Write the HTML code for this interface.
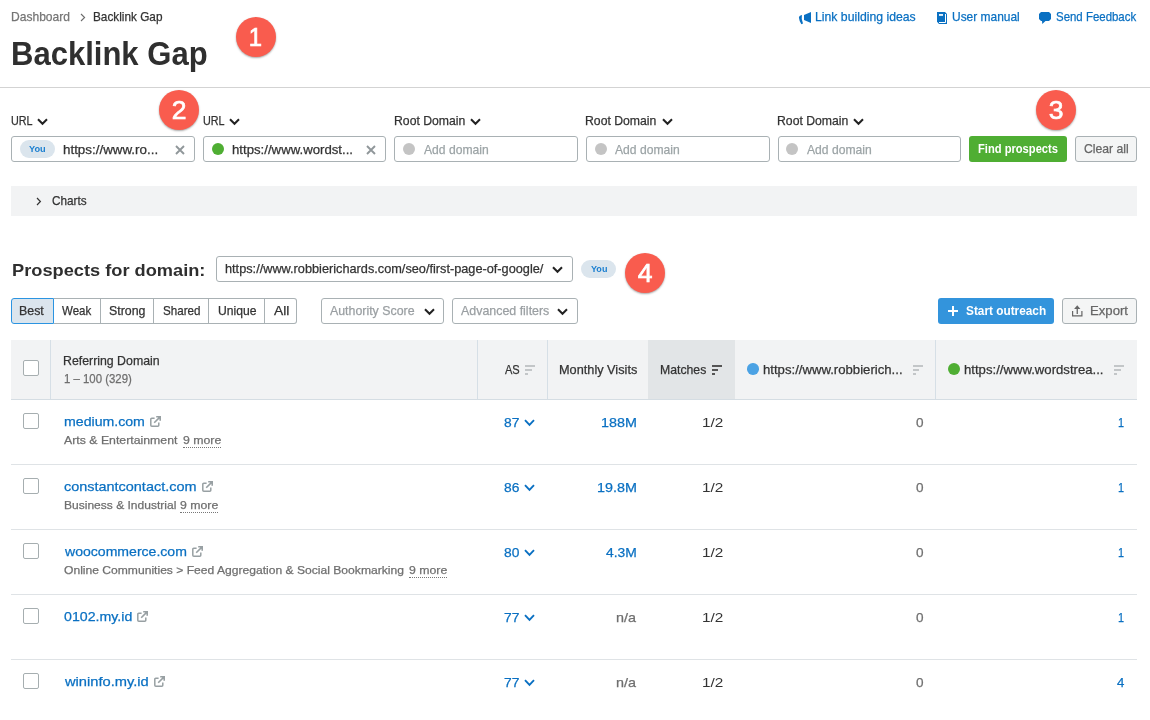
<!DOCTYPE html>
<html lang="en"><head><meta charset="utf-8"><title>Backlink Gap</title>
<style>
*{box-sizing:border-box;margin:0;padding:0}
html,body{width:1150px;height:720px;overflow:hidden;background:#fff;font-family:"Liberation Sans",sans-serif}
body{position:relative}
#page{position:absolute;left:0;top:0;width:1150px;height:720px;will-change:transform}
.t{position:absolute;white-space:pre;line-height:20px;height:20px;transform-origin:0 50%;z-index:3;-webkit-text-stroke:0.25px}
.a{position:absolute}
.inp{position:absolute;top:136px;height:26px;border:1px solid #a9b1b4;border-radius:3px;background:#fff}
.dot{position:absolute;width:12px;height:12px;border-radius:50%}
.num{position:absolute;width:40px;height:40px;border-radius:50%;background:#f95c4e;color:#fff;font-size:26.5px;font-weight:400;-webkit-text-stroke:0.7px #fff;line-height:41px;text-align:center;box-shadow:0 1px 2px rgba(0,0,0,.35)}
.hl{position:absolute;height:1px;left:11px;width:1126px;background:#dfe3e6}
.vl{position:absolute;width:1px;top:340px;height:59px;background:#d6dfe6}
.cb{position:absolute;left:23px;width:16px;height:16px;border:1px solid #a6aeb0;border-radius:2px;background:#fff}
.seg{position:absolute;top:298px;height:26px;border:1px solid #a9b1b4;border-left:none;background:#fff}
svg{position:absolute;overflow:visible}
.num span{display:inline-block;transform:scaleX(1.0)}

</style></head>
<body>
<div id="page">
<!-- top rule -->
<div class="a" style="left:0;top:87px;width:1150px;height:1px;background:#d3d3d3"></div>
<!-- breadcrumb arrow -->
<svg style="left:80px;top:12.5px" width="6" height="9" viewBox="0 0 6 9"><path d="M1 1 L4.6 4.5 L1 8" fill="none" stroke="#6b6b6b" stroke-width="1.1"/></svg>
<!-- numbered markers -->
<div class="num" style="left:236px;top:17px"><span style="transform:scaleX(0.9) translateX(-1px)">1</span></div>
<div class="num" style="left:159px;top:90px"><span>2</span></div>
<div class="num" style="left:1036px;top:90px"><span>3</span></div>
<div class="num" style="left:625px;top:253px"><span>4</span></div>
<!-- top link icons -->
<svg style="left:798px;top:11px" width="14" height="14" viewBox="0 0 14 14"><path d="M6 4.1 L13 1 V12 L6 9 Z" fill="#0a70c2"/><path d="M3.6 4 Q0.9 4.6 0.9 6.6 Q1 9.4 3.4 13.2 L5 12.5 Q3 8.6 3.9 4 Z" fill="#0a70c2"/></svg>
<svg style="left:937px;top:12px" width="10" height="12" viewBox="0 0 10 12"><path d="M0 0 H8 L10 2 V12 H2 L0 9.7 Z" fill="#0a70c2"/><path d="M2 10.5 H8.5 V2" fill="none" stroke="#fff" stroke-width="1"/><rect x="2" y="2.1" width="4" height="1.7" fill="#fff"/></svg>
<svg style="left:1039px;top:12px" width="12" height="12" viewBox="0 0 12 12"><path d="M2 0 H10 L12 2 V7 L10 9 H6.5 L3.3 12 L3 9 H2 L0 7 V2 Z" fill="#0a70c2"/></svg>
<!-- label chevrons -->
<svg style="left:37.0px;top:117.6px" width="11" height="8" viewBox="0 0 11 8"><path d="M1 1.2 L5.5 5.8 L10 1.2" fill="none" stroke="#222" stroke-width="2"/></svg>
<svg style="left:229.0px;top:117.6px" width="11" height="8" viewBox="0 0 11 8"><path d="M1 1.2 L5.5 5.8 L10 1.2" fill="none" stroke="#222" stroke-width="2"/></svg>
<svg style="left:470.0px;top:117.6px" width="11" height="8" viewBox="0 0 11 8"><path d="M1 1.2 L5.5 5.8 L10 1.2" fill="none" stroke="#222" stroke-width="2"/></svg>
<svg style="left:661.5px;top:117.6px" width="11" height="8" viewBox="0 0 11 8"><path d="M1 1.2 L5.5 5.8 L10 1.2" fill="none" stroke="#222" stroke-width="2"/></svg>
<svg style="left:853.0px;top:117.6px" width="11" height="8" viewBox="0 0 11 8"><path d="M1 1.2 L5.5 5.8 L10 1.2" fill="none" stroke="#222" stroke-width="2"/></svg>
<!-- inputs -->
<div class="inp" style="left:11px;width:183.5px"></div>
<div class="inp" style="left:203px;width:183px"></div>
<div class="inp" style="left:394px;width:184px"></div>
<div class="inp" style="left:586px;width:184px"></div>
<div class="inp" style="left:778px;width:183px"></div>
<div class="a" style="left:20px;top:140px;width:35px;height:18px;border-radius:9px;background:#dbe5ed"></div>
<div class="dot" style="left:212px;top:143px;background:#4fae33"></div>
<div class="dot" style="left:403px;top:143px;background:#c4c4c4"></div>
<div class="dot" style="left:594.5px;top:143px;background:#c4c4c4"></div>
<div class="dot" style="left:786px;top:143px;background:#c4c4c4"></div>
<svg style="left:175px;top:144.5px" width="10" height="10" viewBox="0 0 10 10"><path d="M1 1 L9 9 M9 1 L1 9" stroke="#90979a" stroke-width="1.9"/></svg>
<svg style="left:366px;top:144.5px" width="10" height="10" viewBox="0 0 10 10"><path d="M1 1 L9 9 M9 1 L1 9" stroke="#90979a" stroke-width="1.9"/></svg>
<div class="a" style="left:969px;top:136px;width:98px;height:26px;border-radius:3px;background:#4fae33"></div>
<div class="a" style="left:1075px;top:136px;width:62px;height:26px;border-radius:3px;background:#f4f5f5;border:1px solid #a9b1b4"></div>
<!-- charts bar -->
<div class="a" style="left:11px;top:186px;width:1126px;height:30px;background:#f2f3f4"></div>
<svg style="left:36px;top:196.5px" width="6" height="9" viewBox="0 0 6 9"><path d="M1 1 L4.4 4.5 L1 8" fill="none" stroke="#333" stroke-width="1.2"/></svg>
<!-- prospects dropdown -->
<div class="a" style="left:216px;top:256px;width:357px;height:26px;border:1px solid #a9b1b4;border-radius:3px;background:#fff"></div>
<svg style="left:552.2px;top:266px" width="11" height="8" viewBox="0 0 11 8"><path d="M1 1.2 L5.5 5.8 L10 1.2" fill="none" stroke="#222" stroke-width="2"/></svg>
<div class="a" style="left:581px;top:260px;width:35px;height:18px;border-radius:9px;background:#dbe5ed"></div>
<!-- segmented buttons -->
<div class="seg" style="left:11px;width:43px;border:1px solid #2b94e1;background:#dbe5ed;border-radius:3px 0 0 3px;z-index:2"></div>
<div class="seg" style="left:54px;width:46.5px"></div>
<div class="seg" style="left:100.5px;width:53px"></div>
<div class="seg" style="left:153.5px;width:55px"></div>
<div class="seg" style="left:208.5px;width:56px"></div>
<div class="seg" style="left:264.5px;width:32px;border-radius:0 3px 3px 0"></div>
<!-- filter dropdowns -->
<div class="a" style="left:321px;top:298px;width:123px;height:26px;border:1px solid #a9b1b4;border-radius:3px;background:#fff"></div>
<svg style="left:423.5px;top:307.5px" width="11" height="8" viewBox="0 0 11 8"><path d="M1 1.2 L5.5 5.8 L10 1.2" fill="none" stroke="#222" stroke-width="2"/></svg>
<div class="a" style="left:452px;top:298px;width:126px;height:26px;border:1px solid #a9b1b4;border-radius:3px;background:#fff"></div>
<svg style="left:557.2px;top:307.5px" width="11" height="8" viewBox="0 0 11 8"><path d="M1 1.2 L5.5 5.8 L10 1.2" fill="none" stroke="#222" stroke-width="2"/></svg>
<!-- action buttons -->
<div class="a" style="left:938px;top:298px;width:116px;height:26px;border-radius:3px;background:#3394dc"></div>
<svg style="left:948.2px;top:305.9px" width="10" height="10" viewBox="0 0 10 10"><path d="M5 0 V10 M0 5 H10" stroke="#fff" stroke-width="2"/></svg>
<div class="a" style="left:1062px;top:298px;width:75px;height:26px;border-radius:3px;background:#f4f5f5;border:1px solid #a9b1b4"></div>
<svg style="left:1072px;top:305px" width="11" height="12" viewBox="0 0 11 12"><path d="M0.6 6 V10.8 H9.9 V6" fill="none" stroke="#666" stroke-width="1.2"/><path d="M5.25 9 V3" fill="none" stroke="#666" stroke-width="1.3"/><path d="M5.25 0.2 L8.4 4 H2.1 Z" fill="#666"/></svg>
<!-- table header -->
<div class="a" style="left:11px;top:340px;width:1126px;height:59px;background:#f2f3f4"></div>
<div class="a" style="left:648px;top:340px;width:87px;height:59px;background:#e2e5e7"></div>
<div class="vl" style="left:50px"></div>
<div class="vl" style="left:477px"></div>
<div class="vl" style="left:547px"></div>
<div class="vl" style="left:935px"></div>
<div class="hl" style="top:399px;background:#d5dde3"></div>
<div class="hl" style="top:464px"></div>
<div class="hl" style="top:529px"></div>
<div class="hl" style="top:594px"></div>
<div class="hl" style="top:659px"></div>
<!-- header dots -->
<div class="dot" style="left:747px;top:363px;width:11.5px;height:11.5px;background:#4ba2e4"></div>
<div class="dot" style="left:948px;top:363px;background:#4fae33"></div>
<!-- checkboxes -->
<div class="cb" style="top:360px"></div>
<div class="cb" style="top:413px"></div>
<div class="cb" style="top:478px"></div>
<div class="cb" style="top:543px"></div>
<div class="cb" style="top:608px"></div>
<div class="cb" style="top:673px"></div>

<div class="a" style="left:183.0px;top:446.5px;width:38.0px;height:0;border-top:1px dotted #777"></div>
<div class="a" style="left:180.4px;top:511.5px;width:38.0px;height:0;border-top:1px dotted #777"></div>
<div class="a" style="left:408.9px;top:576.5px;width:38.0px;height:0;border-top:1px dotted #777"></div>
<svg style="left:150.2px;top:416.0px" width="11" height="11" viewBox="0 0 11 11"><path d="M4.6 2.2 H1.8 Q0.8 2.2 0.8 3.2 V9.2 Q0.8 10.2 1.8 10.2 H7.8 Q8.8 10.2 8.8 9.2 V6.6" fill="none" stroke="#98a0a3" stroke-width="1.5"/><path d="M4.2 6.8 L9.6 1.4 M6.2 0.8 H10.2 V4.8" fill="none" stroke="#98a0a3" stroke-width="1.6"/></svg>
<svg style="left:201.8px;top:481.0px" width="11" height="11" viewBox="0 0 11 11"><path d="M4.6 2.2 H1.8 Q0.8 2.2 0.8 3.2 V9.2 Q0.8 10.2 1.8 10.2 H7.8 Q8.8 10.2 8.8 9.2 V6.6" fill="none" stroke="#98a0a3" stroke-width="1.5"/><path d="M4.2 6.8 L9.6 1.4 M6.2 0.8 H10.2 V4.8" fill="none" stroke="#98a0a3" stroke-width="1.6"/></svg>
<svg style="left:192.3px;top:546.0px" width="11" height="11" viewBox="0 0 11 11"><path d="M4.6 2.2 H1.8 Q0.8 2.2 0.8 3.2 V9.2 Q0.8 10.2 1.8 10.2 H7.8 Q8.8 10.2 8.8 9.2 V6.6" fill="none" stroke="#98a0a3" stroke-width="1.5"/><path d="M4.2 6.8 L9.6 1.4 M6.2 0.8 H10.2 V4.8" fill="none" stroke="#98a0a3" stroke-width="1.6"/></svg>
<svg style="left:137.3px;top:611.0px" width="11" height="11" viewBox="0 0 11 11"><path d="M4.6 2.2 H1.8 Q0.8 2.2 0.8 3.2 V9.2 Q0.8 10.2 1.8 10.2 H7.8 Q8.8 10.2 8.8 9.2 V6.6" fill="none" stroke="#98a0a3" stroke-width="1.5"/><path d="M4.2 6.8 L9.6 1.4 M6.2 0.8 H10.2 V4.8" fill="none" stroke="#98a0a3" stroke-width="1.6"/></svg>
<svg style="left:153.8px;top:676.0px" width="11" height="11" viewBox="0 0 11 11"><path d="M4.6 2.2 H1.8 Q0.8 2.2 0.8 3.2 V9.2 Q0.8 10.2 1.8 10.2 H7.8 Q8.8 10.2 8.8 9.2 V6.6" fill="none" stroke="#98a0a3" stroke-width="1.5"/><path d="M4.2 6.8 L9.6 1.4 M6.2 0.8 H10.2 V4.8" fill="none" stroke="#98a0a3" stroke-width="1.6"/></svg>
<svg style="left:524.2px;top:419.4px" width="11" height="8" viewBox="0 0 11 8"><path d="M1 1.2 L5.5 5.8 L10 1.2" fill="none" stroke="#0a70c2" stroke-width="1.9"/></svg>
<svg style="left:524.2px;top:484.4px" width="11" height="8" viewBox="0 0 11 8"><path d="M1 1.2 L5.5 5.8 L10 1.2" fill="none" stroke="#0a70c2" stroke-width="1.9"/></svg>
<svg style="left:524.2px;top:549.4px" width="11" height="8" viewBox="0 0 11 8"><path d="M1 1.2 L5.5 5.8 L10 1.2" fill="none" stroke="#0a70c2" stroke-width="1.9"/></svg>
<svg style="left:524.2px;top:614.4px" width="11" height="8" viewBox="0 0 11 8"><path d="M1 1.2 L5.5 5.8 L10 1.2" fill="none" stroke="#0a70c2" stroke-width="1.9"/></svg>
<svg style="left:524.2px;top:679.4px" width="11" height="8" viewBox="0 0 11 8"><path d="M1 1.2 L5.5 5.8 L10 1.2" fill="none" stroke="#0a70c2" stroke-width="1.9"/></svg>
<div class="a" style="left:525px;top:365px;width:10px;height:2px;background:#c3c6c8"></div><div class="a" style="left:525px;top:369px;width:6.5px;height:2px;background:#c3c6c8"></div><div class="a" style="left:525px;top:373px;width:3px;height:2px;background:#c3c6c8"></div>
<div class="a" style="left:711.5px;top:365px;width:10px;height:2px;background:#555"></div><div class="a" style="left:711.5px;top:369px;width:6.5px;height:2px;background:#555"></div><div class="a" style="left:711.5px;top:373px;width:3px;height:2px;background:#555"></div>
<div class="a" style="left:912.5px;top:365px;width:10px;height:2px;background:#c3c6c8"></div><div class="a" style="left:912.5px;top:369px;width:6.5px;height:2px;background:#c3c6c8"></div><div class="a" style="left:912.5px;top:373px;width:3px;height:2px;background:#c3c6c8"></div>
<div class="a" style="left:1114px;top:365px;width:10px;height:2px;background:#c3c6c8"></div><div class="a" style="left:1114px;top:369px;width:6.5px;height:2px;background:#c3c6c8"></div><div class="a" style="left:1114px;top:373px;width:3px;height:2px;background:#c3c6c8"></div>
<span class="t" style="left:10.5px;top:7px;font-size:12.58px;font-weight:400;color:#757575;transform:scaleX(0.958);">Dashboard</span>
<span class="t" style="left:93.1px;top:7px;font-size:12.58px;font-weight:400;color:#333333;transform:scaleX(0.937);">Backlink Gap</span>
<span class="t" style="left:10.6px;top:44px;font-size:32.43px;font-weight:700;color:#2f2f2f;transform:scaleX(0.957);-webkit-text-stroke:0;">Backlink Gap</span>
<span class="t" style="left:814.8px;top:7px;font-size:12.58px;font-weight:400;color:#0a70c2;transform:scaleX(0.973);">Link building ideas</span>
<span class="t" style="left:952.0px;top:7px;font-size:12.58px;font-weight:400;color:#0a70c2;transform:scaleX(0.950);">User manual</span>
<span class="t" style="left:1055.7px;top:7px;font-size:12.58px;font-weight:400;color:#0a70c2;transform:scaleX(0.910);">Send Feedback</span>
<span class="t" style="left:11.3px;top:111px;font-size:12.58px;font-weight:400;color:#333333;transform:scaleX(0.858);">URL</span>
<span class="t" style="left:203.0px;top:111px;font-size:12.58px;font-weight:400;color:#333333;transform:scaleX(0.858);">URL</span>
<span class="t" style="left:393.9px;top:111px;font-size:12.58px;font-weight:400;color:#333333;transform:scaleX(0.972);">Root Domain</span>
<span class="t" style="left:585.4px;top:111px;font-size:12.58px;font-weight:400;color:#333333;transform:scaleX(0.972);">Root Domain</span>
<span class="t" style="left:776.8px;top:111px;font-size:12.58px;font-weight:400;color:#333333;transform:scaleX(0.972);">Root Domain</span>
<span class="t" style="left:29.4px;top:139px;font-size:9.68px;font-weight:700;color:#1b7fd0;transform:scaleX(0.952);-webkit-text-stroke:0;">You</span>
<span class="t" style="left:63.4px;top:140px;font-size:12.58px;font-weight:400;color:#333333;transform:scaleX(1.063);">https://www.ro...</span>
<span class="t" style="left:232.0px;top:140px;font-size:12.58px;font-weight:400;color:#333333;transform:scaleX(1.049);">https://www.wordst...</span>
<span class="t" style="left:423.6px;top:140px;font-size:12.58px;font-weight:400;color:#9ca4a6;transform:scaleX(0.964);">Add domain</span>
<span class="t" style="left:615.1px;top:140px;font-size:12.58px;font-weight:400;color:#9ca4a6;transform:scaleX(0.964);">Add domain</span>
<span class="t" style="left:806.6px;top:140px;font-size:12.58px;font-weight:400;color:#9ca4a6;transform:scaleX(0.964);">Add domain</span>
<span class="t" style="left:978.0px;top:139px;font-size:12.58px;font-weight:700;color:#ffffff;transform:scaleX(0.887);-webkit-text-stroke:0;">Find prospects</span>
<span class="t" style="left:1084.0px;top:139px;font-size:12.58px;font-weight:400;color:#666666;transform:scaleX(0.970);">Clear all</span>
<span class="t" style="left:51.6px;top:191px;font-size:12.58px;font-weight:400;color:#333333;transform:scaleX(0.936);">Charts</span>
<span class="t" style="left:11.5px;top:260px;font-size:17.42px;font-weight:700;color:#2f2f2f;transform:scaleX(1.047);-webkit-text-stroke:0;">Prospects for domain:</span>
<span class="t" style="left:225.0px;top:259px;font-size:12.58px;font-weight:400;color:#333333;transform:scaleX(1.012);">https://www.robbierichards.com/seo/first-page-of-google/</span>
<span class="t" style="left:590.5px;top:259px;font-size:9.68px;font-weight:700;color:#1b7fd0;transform:scaleX(0.935);-webkit-text-stroke:0;">You</span>
<span class="t" style="left:19.3px;top:301px;font-size:12.58px;font-weight:400;color:#333333;transform:scaleX(0.985);">Best</span>
<span class="t" style="left:61.8px;top:301px;font-size:12.58px;font-weight:400;color:#333333;transform:scaleX(0.913);">Weak</span>
<span class="t" style="left:108.8px;top:301px;font-size:12.58px;font-weight:400;color:#333333;transform:scaleX(0.982);">Strong</span>
<span class="t" style="left:162.5px;top:301px;font-size:12.58px;font-weight:400;color:#333333;transform:scaleX(0.924);">Shared</span>
<span class="t" style="left:217.5px;top:301px;font-size:12.58px;font-weight:400;color:#333333;transform:scaleX(0.966);">Unique</span>
<span class="t" style="left:273.5px;top:301px;font-size:12.58px;font-weight:400;color:#333333;transform:scaleX(1.100);">All</span>
<span class="t" style="left:329.5px;top:301px;font-size:12.58px;font-weight:400;color:#9a9fa2;transform:scaleX(0.983);">Authority Score</span>
<span class="t" style="left:461.0px;top:301px;font-size:12.58px;font-weight:400;color:#9a9fa2;transform:scaleX(0.987);">Advanced filters</span>
<span class="t" style="left:966.0px;top:301px;font-size:12.58px;font-weight:700;color:#ffffff;transform:scaleX(0.940);-webkit-text-stroke:0;">Start outreach</span>
<span class="t" style="left:1090.0px;top:301px;font-size:12.58px;font-weight:400;color:#666666;transform:scaleX(1.046);">Export</span>
<span class="t" style="left:62.6px;top:351px;font-size:12.58px;font-weight:400;color:#333333;transform:scaleX(0.980);">Referring Domain</span>
<span class="t" style="left:63.9px;top:369px;font-size:12.1px;font-weight:400;color:#6f6f6f;transform:scaleX(0.943);">1 – 100 (329)</span>
<span class="t" style="left:505.0px;top:360px;font-size:12.58px;font-weight:400;color:#333333;transform:scaleX(0.879);">AS</span>
<span class="t" style="left:558.5px;top:360px;font-size:12.58px;font-weight:400;color:#333333;transform:scaleX(1.012);">Monthly Visits</span>
<span class="t" style="left:660.0px;top:360px;font-size:12.58px;font-weight:400;color:#333333;transform:scaleX(0.973);">Matches</span>
<span class="t" style="left:763.0px;top:360px;font-size:12.58px;font-weight:400;color:#333333;transform:scaleX(1.045);">https://www.robbierich...</span>
<span class="t" style="left:964.0px;top:360px;font-size:12.58px;font-weight:400;color:#333333;transform:scaleX(1.045);">https://www.wordstrea...</span>
<span class="t" style="left:63.8px;top:412px;font-size:13.55px;font-weight:400;color:#0a70c2;transform:scaleX(1.043);">medium.com</span>
<span class="t" style="left:63.5px;top:430px;font-size:11.62px;font-weight:400;color:#6f6f6f;transform:scaleX(1.059);">Arts &amp; Entertainment</span>
<span class="t" style="left:183.0px;top:430px;font-size:11.62px;font-weight:400;color:#6f6f6f;transform:scaleX(1.060);">9 more</span>
<span class="t" style="left:504.0px;top:413px;font-size:13.55px;font-weight:400;color:#0a70c2;transform:scaleX(1.018);">87</span>
<span class="t" style="left:600.9px;top:413px;font-size:13.55px;font-weight:400;color:#0a70c2;transform:scaleX(1.058);">188M</span>
<span class="t" style="left:701.5px;top:413px;font-size:13.55px;font-weight:400;color:#333333;transform:scaleX(1.133);-webkit-text-stroke:0;">1/2</span>
<span class="t" style="left:916.0px;top:413px;font-size:13.55px;font-weight:400;color:#6f6f6f;transform:scaleX(1.000);">0</span>
<span class="t" style="left:1118.0px;top:413px;font-size:13.55px;font-weight:400;color:#0a70c2;transform:scaleX(0.800);">1</span>
<span class="t" style="left:63.8px;top:477px;font-size:13.55px;font-weight:400;color:#0a70c2;transform:scaleX(1.066);">constantcontact.com</span>
<span class="t" style="left:63.5px;top:495px;font-size:11.62px;font-weight:400;color:#6f6f6f;transform:scaleX(1.036);">Business &amp; Industrial</span>
<span class="t" style="left:180.4px;top:495px;font-size:11.62px;font-weight:400;color:#6f6f6f;transform:scaleX(1.060);">9 more</span>
<span class="t" style="left:504.0px;top:478px;font-size:13.55px;font-weight:400;color:#0a70c2;transform:scaleX(1.018);">86</span>
<span class="t" style="left:596.9px;top:478px;font-size:13.55px;font-weight:400;color:#0a70c2;transform:scaleX(1.059);">19.8M</span>
<span class="t" style="left:701.5px;top:478px;font-size:13.55px;font-weight:400;color:#333333;transform:scaleX(1.133);-webkit-text-stroke:0;">1/2</span>
<span class="t" style="left:916.0px;top:478px;font-size:13.55px;font-weight:400;color:#6f6f6f;transform:scaleX(1.000);">0</span>
<span class="t" style="left:1118.0px;top:478px;font-size:13.55px;font-weight:400;color:#0a70c2;transform:scaleX(0.800);">1</span>
<span class="t" style="left:64.8px;top:542px;font-size:13.55px;font-weight:400;color:#0a70c2;transform:scaleX(1.038);">woocommerce.com</span>
<span class="t" style="left:63.5px;top:560px;font-size:11.62px;font-weight:400;color:#6f6f6f;transform:scaleX(1.042);">Online Communities &gt; Feed Aggregation &amp; Social Bookmarking</span>
<span class="t" style="left:408.9px;top:560px;font-size:11.62px;font-weight:400;color:#6f6f6f;transform:scaleX(1.060);">9 more</span>
<span class="t" style="left:504.0px;top:543px;font-size:13.55px;font-weight:400;color:#0a70c2;transform:scaleX(1.018);">80</span>
<span class="t" style="left:606.0px;top:543px;font-size:13.55px;font-weight:400;color:#0a70c2;transform:scaleX(1.022);">4.3M</span>
<span class="t" style="left:701.5px;top:543px;font-size:13.55px;font-weight:400;color:#333333;transform:scaleX(1.133);-webkit-text-stroke:0;">1/2</span>
<span class="t" style="left:916.0px;top:543px;font-size:13.55px;font-weight:400;color:#6f6f6f;transform:scaleX(1.000);">0</span>
<span class="t" style="left:1118.0px;top:543px;font-size:13.55px;font-weight:400;color:#0a70c2;transform:scaleX(0.800);">1</span>
<span class="t" style="left:63.8px;top:607px;font-size:13.55px;font-weight:400;color:#0a70c2;transform:scaleX(1.046);">0102.my.id</span>
<span class="t" style="left:504.0px;top:608px;font-size:13.55px;font-weight:400;color:#0a70c2;transform:scaleX(1.018);">77</span>
<span class="t" style="left:616.0px;top:608px;font-size:13.55px;font-weight:400;color:#6f6f6f;transform:scaleX(1.062);">n/a</span>
<span class="t" style="left:701.5px;top:608px;font-size:13.55px;font-weight:400;color:#333333;transform:scaleX(1.133);-webkit-text-stroke:0;">1/2</span>
<span class="t" style="left:916.0px;top:608px;font-size:13.55px;font-weight:400;color:#6f6f6f;transform:scaleX(1.000);">0</span>
<span class="t" style="left:1118.0px;top:608px;font-size:13.55px;font-weight:400;color:#0a70c2;transform:scaleX(0.800);">1</span>
<span class="t" style="left:64.9px;top:672px;font-size:13.55px;font-weight:400;color:#0a70c2;transform:scaleX(1.083);">wininfo.my.id</span>
<span class="t" style="left:504.0px;top:673px;font-size:13.55px;font-weight:400;color:#0a70c2;transform:scaleX(1.018);">77</span>
<span class="t" style="left:616.0px;top:673px;font-size:13.55px;font-weight:400;color:#6f6f6f;transform:scaleX(1.062);">n/a</span>
<span class="t" style="left:701.5px;top:673px;font-size:13.55px;font-weight:400;color:#333333;transform:scaleX(1.133);-webkit-text-stroke:0;">1/2</span>
<span class="t" style="left:916.0px;top:673px;font-size:13.55px;font-weight:400;color:#6f6f6f;transform:scaleX(1.000);">0</span>
<span class="t" style="left:1117.0px;top:673px;font-size:13.55px;font-weight:400;color:#0a70c2;transform:scaleX(0.975);">4</span>
</div>
</body></html>
